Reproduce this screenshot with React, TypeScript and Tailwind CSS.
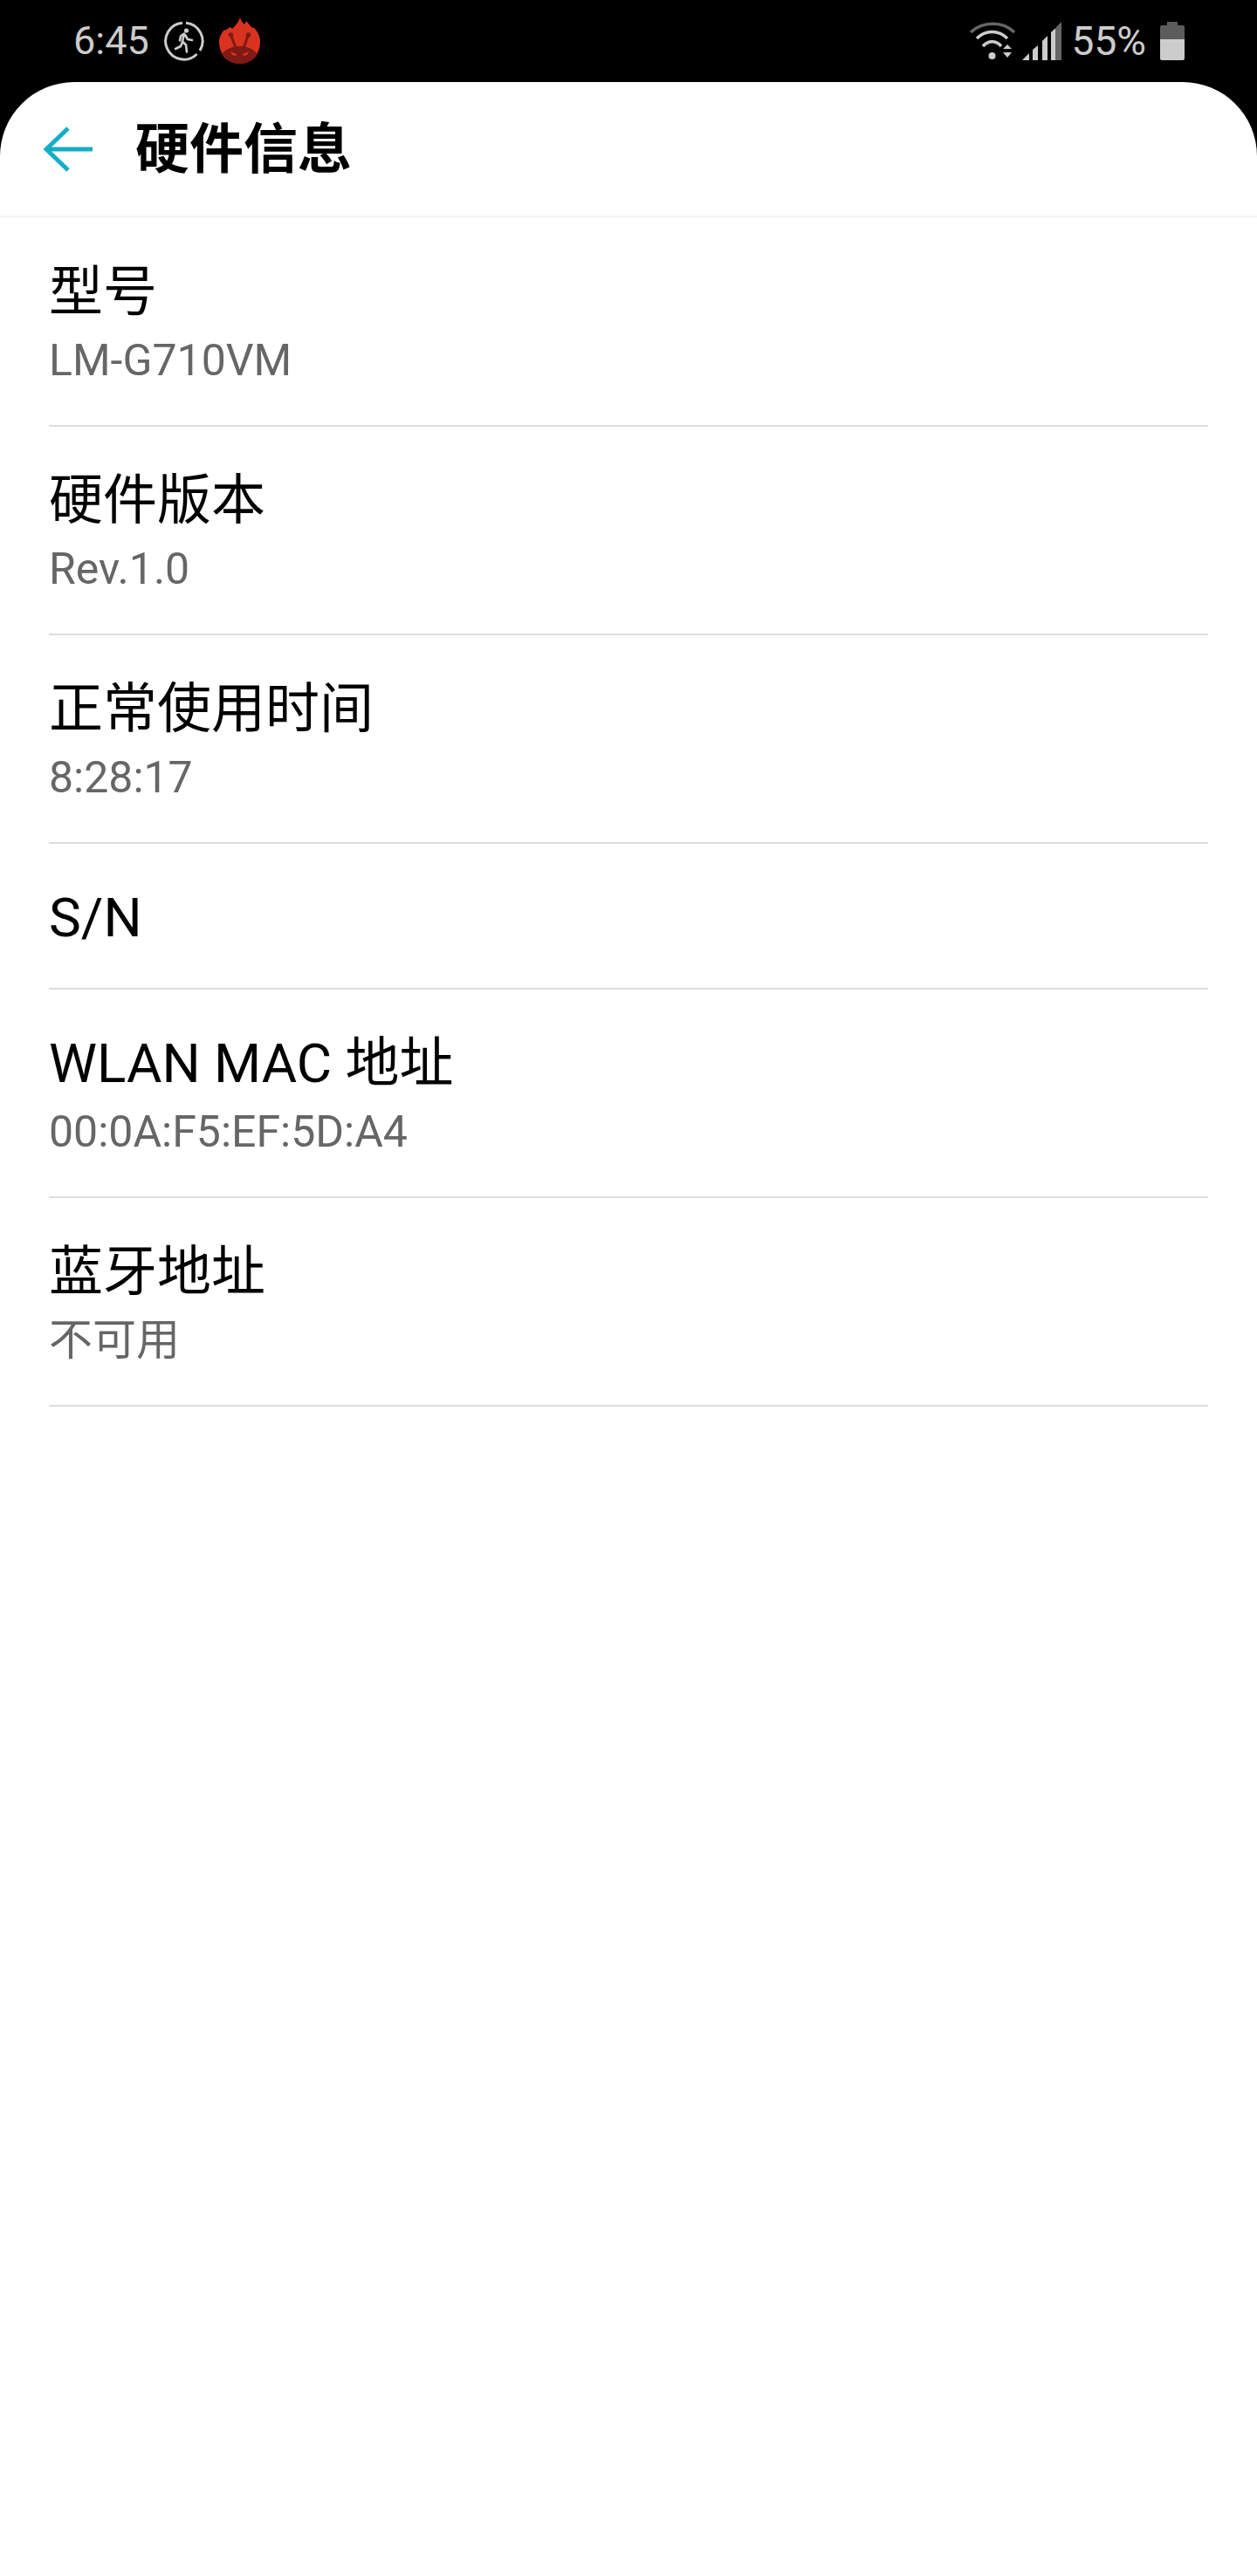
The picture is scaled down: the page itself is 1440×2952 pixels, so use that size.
const rows = [
  { label: '型号', value: 'LM-G710VM' },
  { label: '硬件版本', value: 'Rev.1.0' },
  { label: '正常使用时间', value: '8:28:17' },
  { label: 'S/N' },
  { label: 'WLAN MAC 地址', value: '00:0A:F5:EF:5D:A4' },
  { label: '蓝牙地址', value: '不可用' },
];

function RunIcon() {
  return (
    <svg width="46" height="46" viewBox="0 0 46 46" fill="none" className="ml-[17px]">
      <path d="M25 2.200A21 21 0 0 1 41 34" stroke="#ccc" strokeWidth="3" />
      <path d="M37.500 38A21 21 0 1 1 21 2.200" stroke="#ccc" strokeWidth="3" />
      <circle cx="25.500" cy="11" r="2.600" fill="#ccc" />
      <path d="M23 14.500l-4 3-1 5M23 14.500l-2 9 4 4 1 8M21 24l-2 5-6 3M24 16l3 5 5 1" stroke="#ccc" strokeWidth="2.600" strokeLinecap="round" strokeLinejoin="round" />
    </svg>
  );
}

function AntutuIcon() {
  return (
    <svg width="47" height="54" viewBox="0 0 47 54" className="ml-[17px]">
      <path d="M24 0c1 4 3 6 5 8 1-2 2-3 2-4 3 3 4 5 6 7 2 1 3 1 3 1 4 4 7 9 7 16 0 14-10 25-23.500 25S0 42 0 28c0-6 3-10 6-14l1 1c2-2 4-3 6-4 1 1 1 1 2 2 3-3 7-7 9-13z" fill="#d9331f" />
      <path d="M3 42C8 36 15 33 23.500 33S39 36 44 42C40 49 32 53 23.500 53S7 49 3 42z" fill="#7f1a16" />
      <path d="M13.500 20L19 35M33.500 20L28 35" stroke="#7f1a16" strokeWidth="3" />
      <circle cx="13.500" cy="20" r="2.800" fill="#7f1a16" />
      <circle cx="33.500" cy="20" r="2.800" fill="#7f1a16" />
      <path d="M13 39l7 3-1 2-4-1zM34 39l-7 3 1 2 4-1z" fill="#d9331f" />
    </svg>
  );
}

function WifiIcon() {
  return (
    <svg width="52" height="44" viewBox="0 0 52 44" fill="none" className="mr-[8px]">
      <path d="M1 12C15 -1 38 -1 51 12" stroke="#666" strokeWidth="3.500" />
      <path d="M8 19C18 9 33 9 43 19" stroke="#ccc" strokeWidth="3.500" />
      <path d="M15 28C21 21 30 21 36 28" stroke="#ccc" strokeWidth="3.500" />
      <circle cx="25.500" cy="39" r="4" fill="#ccc" />
      <path d="M43 26l5 5H38zM38 35h10l-5 6z" fill="#ccc" />
    </svg>
  );
}

function SignalIcon() {
  return (
    <svg width="45" height="44" viewBox="0 0 45 44" className="mr-[12px]">
      <path d="M0 44L8 36V44z" fill="#ccc" />
      <path d="M12 32L18 27V44H12z" fill="#ccc" />
      <path d="M23 22L29 16V44H23z" fill="#ccc" />
      <path d="M33 12L38.500 7V44H33z" fill="#ccc" />
      <path d="M39 6L45 0V44H39z" fill="#666" />
    </svg>
  );
}

function BatteryIcon() {
  return (
    <svg width="28" height="44" viewBox="0 0 28 44" className="ml-[16px]">
      <path d="M8 0h12v4h6a2 2 0 0 1 2 2v14H0V6a2 2 0 0 1 2-2h6z" fill="#5c5c5c" />
      <path d="M0 20h28v22a2 2 0 0 1-2 2H2a2 2 0 0 1-2-2z" fill="#ccc" />
    </svg>
  );
}

function StatusBar() {
  return (
    <div className="flex h-[94px] shrink-0 items-center justify-between bg-black pl-[84px] pr-[83px] pb-[1px] font-['Roboto',sans-serif] text-[#ccc]">
      <div className="flex items-center">
        <span className="text-[45px] leading-none">6:45</span>
        <RunIcon />
        <AntutuIcon />
      </div>
      <div className="flex items-center">
        <WifiIcon />
        <SignalIcon />
        <span className="text-[46px] leading-none">55%</span>
        <BatteryIcon />
      </div>
    </div>
  );
}

function Row({ label, value }: { label: string; value?: string }) {
  return (
    <div className={`flex flex-col justify-center border-b-2 border-[#dddddd] pt-[4px] ${value ? 'h-[239px]' : 'h-[167px]'}`}>
      <div className="text-[62px] leading-[72px] text-black">{label}</div>
      {value && <div className="mt-[12px] text-[50px] leading-[60px] text-[#666666]">{value}</div>}
    </div>
  );
}

export default function App() {
  return (
    <div className="flex h-[2952px] flex-col bg-black">
      <StatusBar />
      <div className="flex-1 rounded-t-[85px] bg-white font-['Roboto','Noto_Sans_CJK_SC',sans-serif]">
        <div className="flex h-[155px] items-center border-b-2 border-[#f3f3f3] pl-[50px]">
          <svg width="56" height="52" viewBox="0 0 56 52" fill="none">
            <path d="M28 2L3 26l25 24M3 26h53" stroke="#12aec6" strokeWidth="5" />
          </svg>
          <h1 className="ml-[49px] pt-[3px] text-[62px] font-bold leading-none text-black">硬件信息</h1>
        </div>
        <div className="px-[56px] pt-[1px]">
          {rows.map((row) => (
            <Row key={row.label} {...row} />
          ))}
        </div>
      </div>
    </div>
  );
}
